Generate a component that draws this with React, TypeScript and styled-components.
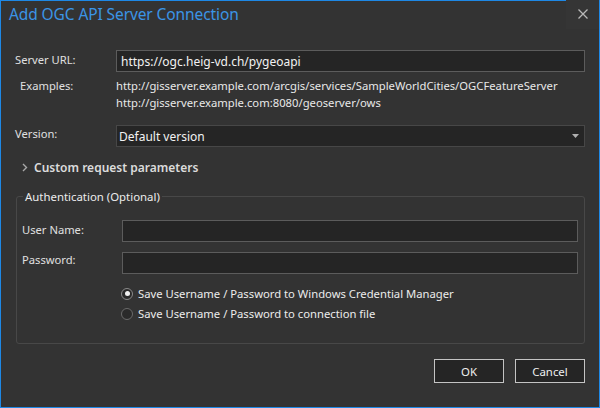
import React from "react";
import styled, { createGlobalStyle } from "styled-components";

const Global = createGlobalStyle`
  html, body { margin: 0; padding: 0; background: #333333; }
  body { font-family: "Noto Sans", "Open Sans", sans-serif; }
  * { box-sizing: border-box; }
`;

const Dialog = styled.div`
  width: 600px;
  height: 408px;
  border: 1px solid #1e88e5;
  background: #333333;
  display: flex;
  flex-direction: column;
  color: #e6e6e6;
  font-size: 12px;
`;

const TitleBar = styled.div`
  height: 31px;
  display: flex;
  align-items: center;
  justify-content: space-between;
`;

const Title = styled.div`
  padding-left: 8px;
  margin-top: -6px;
  font-size: 15.5px;
  color: #3b95e6;
  letter-spacing: -0.1px;
`;

const CloseButton = styled.div`
  width: 33px;
  height: 31px;
  display: flex;
  align-items: center;
  justify-content: center;
  background: #353535;
  margin-top: -6px;
`;

const Content = styled.div`
  padding: 18px 14px 0 14px;
  display: flex;
  flex-direction: column;
`;

const Row = styled.div<{ $mt?: number }>`
  display: grid;
  grid-template-columns: 101px 1fr;
  margin-top: ${(p) => p.$mt ?? 0}px;
`;

const Label = styled.div<{ $indent?: number; $pt?: number }>`
  padding-left: ${(p) => p.$indent ?? 0}px;
  padding-top: ${(p) => p.$pt ?? 1}px;
  color: #e0e0e0;
  font-size: 11.2px;
`;

const Input = styled.div`
  height: 22px;
  border: 1px solid #5c5c5c;
  background: #252525;
  color: #f2f2f2;
  font-size: 12px;
  padding: 0 4px;
  display: flex;
  align-items: center;
`;

const Select = styled(Input)`
  justify-content: space-between;
  padding-left: 2px;
  padding-right: 5px;
  border-color: #474747;
`;

const Examples = styled.div`
  display: flex;
  flex-direction: column;
  line-height: 17px;
  color: #e8e8e8;
  font-size: 11.25px;
`;

const Expander = styled.div`
  margin-top: 12px;
  display: flex;
  align-items: center;
  gap: 6px;
  padding-left: 7px;
  font-weight: 600;
  font-size: 12px;
  color: #dcdcdc;
`;

const Group = styled.fieldset`
  margin: 13px 0 0 1px;
  padding: 16px 6px 12px 5px;
  border: 1px solid #484848;
  border-radius: 3px;
  height: 155px;
  min-width: 0;
`;

const Legend = styled.legend`
  padding: 0 2px;
  margin-left: 1px;
  font-size: 11.4px;
  color: #ececec;
`;

const AuthRow = styled.div<{ $mt?: number }>`
  display: grid;
  grid-template-columns: 100px 1fr;
  margin-top: ${(p) => p.$mt ?? 0}px;
`;

const Radios = styled.div`
  margin-top: 12px;
  margin-left: 100px;
  display: flex;
  flex-direction: column;
  gap: 5px;
`;

const RadioRow = styled.div`
  display: flex;
  align-items: center;
  gap: 5px;
  font-size: 11.25px;
  color: #ececec;
  margin-left: -1px;
`;

const RadioCircle = styled.span<{ $checked?: boolean }>`
  width: 12px;
  height: 12px;
  border-radius: 50%;
  border: 1px solid ${(p) => (p.$checked ? "#8a8a8a" : "#6a6a6a")};
  background: #2a2a2a;
  display: flex;
  align-items: center;
  justify-content: center;
  &::after {
    content: "";
    width: 5px;
    height: 5px;
    border-radius: 50%;
    background: ${(p) => (p.$checked ? "#f0f0f0" : "transparent")};
  }
`;

const Footer = styled.div`
  display: flex;
  justify-content: flex-end;
  gap: 11px;
  padding: 15px 14px 0 0;
`;

const Button = styled.div`
  width: 70px;
  height: 24px;
  border: 1px solid #c4c4c4;
  background: #252525;
  color: #f0f0f0;
  font-size: 11.4px;
  display: flex;
  align-items: center;
  justify-content: center;
`;

export default function App() {
  return (
    <>
      <Global />
      <Dialog>
        <TitleBar>
          <Title>Add OGC API Server Connection</Title>
          <CloseButton>
            <svg width="10" height="10" viewBox="0 0 10 10">
              <path d="M0.5 0.5 L9.5 9.5 M9.5 0.5 L0.5 9.5" stroke="#b8b8b8" strokeWidth="1.3" />
            </svg>
          </CloseButton>
        </TitleBar>
        <Content>
          <Row>
            <Label $pt={2}>Server URL:</Label>
            <Input>https://ogc.heig-vd.ch/pygeoapi</Input>
          </Row>
          <Row $mt={5}>
            <Label $indent={5}>Examples:</Label>
            <Examples>
              <span>http://gisserver.example.com/arcgis/services/SampleWorldCities/OGCFeatureServer</span>
              <span>http://gisserver.example.com:8080/geoserver/ows</span>
            </Examples>
          </Row>
          <Row $mt={14}>
            <Label $pt={1}>Version:</Label>
            <Select>
              <span>Default version</span>
              <svg width="7" height="4" viewBox="0 0 7 4">
                <path d="M0 0 H7 L3.5 4 Z" fill="#b0b0b0" />
              </svg>
            </Select>
          </Row>
          <Expander>
            <svg width="6" height="9" viewBox="0 0 6 9">
              <path d="M1 1 L4.5 4.5 L1 8" stroke="#a8a8a8" strokeWidth="1.4" fill="none" />
            </svg>
            <span>Custom request parameters</span>
          </Expander>
          <Group>
            <Legend>Authentication (Optional)</Legend>
            <AuthRow>
              <Label $pt={2}>User Name:</Label>
              <Input />
            </AuthRow>
            <AuthRow $mt={10}>
              <Label $pt={0}>Password:</Label>
              <Input />
            </AuthRow>
            <Radios>
              <RadioRow>
                <RadioCircle $checked />
                <span>Save Username / Password to Windows Credential Manager</span>
              </RadioRow>
              <RadioRow>
                <RadioCircle />
                <span>Save Username / Password to connection file</span>
              </RadioRow>
            </Radios>
          </Group>
        </Content>
        <Footer>
          <Button>OK</Button>
          <Button>Cancel</Button>
        </Footer>
      </Dialog>
    </>
  );
}
